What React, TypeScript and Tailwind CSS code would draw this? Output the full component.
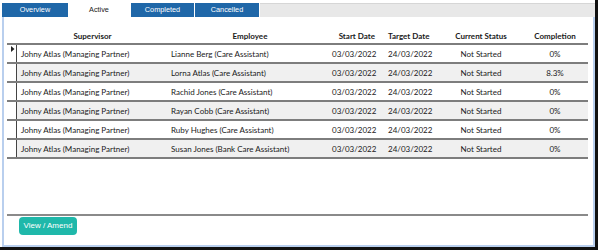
import React from "react";

const rows = [
  ["Johny Atlas (Managing Partner)", "Lianne Berg (Care Assistant)", "03/03/2022", "24/03/2022", "Not Started", "0%"],
  ["Johny Atlas (Managing Partner)", "Lorna Atlas (Care Assistant)", "03/03/2022", "24/03/2022", "Not Started", "8.3%"],
  ["Johny Atlas (Managing Partner)", "Rachid Jones (Care Assistant)", "03/03/2022", "24/03/2022", "Not Started", "0%"],
  ["Johny Atlas (Managing Partner)", "Rayan Cobb (Care Assistant)", "03/03/2022", "24/03/2022", "Not Started", "0%"],
  ["Johny Atlas (Managing Partner)", "Ruby Hughes (Care Assistant)", "03/03/2022", "24/03/2022", "Not Started", "0%"],
  ["Johny Atlas (Managing Partner)", "Susan Jones (Bank Care Assistant)", "03/03/2022", "24/03/2022", "Not Started", "0%"],
];

const grid = "grid grid-cols-[10px_151px_164px_48px_54px_94px_60px] items-center";

export default function App() {
  return (
    <div className="w-[598px] h-[250px] bg-white pl-[2px] pt-[3px] border-r-[3px] border-b-[3px] border-[#111] flex flex-col overflow-hidden">
      {/* tabs */}
      <div className="flex h-[14px] text-[7.3px] font-['Liberation_Sans',Arial,sans-serif] leading-none">
        <div className="w-[66px] bg-[#1f67a8] text-white flex items-center justify-center">Overview</div>
        <div className="w-[62px] bg-white text-[#222] flex items-center justify-center">Active</div>
        <div className="w-[63px] ml-px bg-[#1f67a8] text-white flex items-center justify-center">Completed</div>
        <div className="w-[64px] ml-px bg-[#1f67a8] text-white flex items-center justify-center">Cancelled</div>
        <div className="flex-1 ml-px bg-[#e8e8e8] border-t border-[#d6d6d6]" />
      </div>
      {/* panel */}
      <div className="flex-1 flex flex-col border-l-2 border-r-2 border-b-2 border-[#b9cfee] bg-white font-['Lato','Open_Sans',sans-serif] text-[8px] text-[#1a1a1a]">
        <div className="ml-[3px] w-[581px] pt-[11px]">
          <div className={`${grid} h-[17px] font-bold border-b-2 border-[#7d7d7d]`}>
            <div />
            <div className="text-center">Supervisor</div>
            <div className="text-center">Employee</div>
            <div className="text-right pr-[5px]">Start Date</div>
            <div className="pl-[8px]">Target Date</div>
            <div className="text-center">Current Status</div>
            <div className="text-center pr-[6px]">Completion</div>
          </div>
          {rows.map((r, i) => (
            <div
              key={i}
              className={`${grid} h-[19px] border-b-2 border-[#7d7d7d] ${i % 2 === 1 ? "bg-[#f0f0f0]" : "bg-white"}`}
            >
              <div className="h-full border-r border-[#444] bg-white relative">
                {i === 0 && (
                  <svg className="absolute left-[4px] top-[1px]" width="4" height="6" viewBox="0 0 4 6">
                    <path d="M0 0 L3.5 3 L0 6 Z" fill="#222" />
                  </svg>
                )}
              </div>
              <div className="pl-[4px] whitespace-nowrap">{r[0]}</div>
              <div className="pl-[3px] whitespace-nowrap">{r[1]}</div>
              <div className="text-right pr-[5px]">{r[2]}</div>
              <div className="pl-[8px]">{r[3]}</div>
              <div className="text-center">{r[4]}</div>
              <div className="text-center pr-[6px]">{r[5]}</div>
            </div>
          ))}
        </div>
        <div className="flex-1" />
        <div className="ml-[3px] w-[581px] border-b-2 border-[#8a8a8a]" />
        <div className="h-[29px] pt-px pl-[15px]">
          <button className="h-[18px] w-[58px] rounded-[4px] bg-[#1fb8aa] text-white text-[8px] font-['Liberation_Sans',Arial,sans-serif] flex items-center justify-center">
            View / Amend
          </button>
        </div>
      </div>
    </div>
  );
}
